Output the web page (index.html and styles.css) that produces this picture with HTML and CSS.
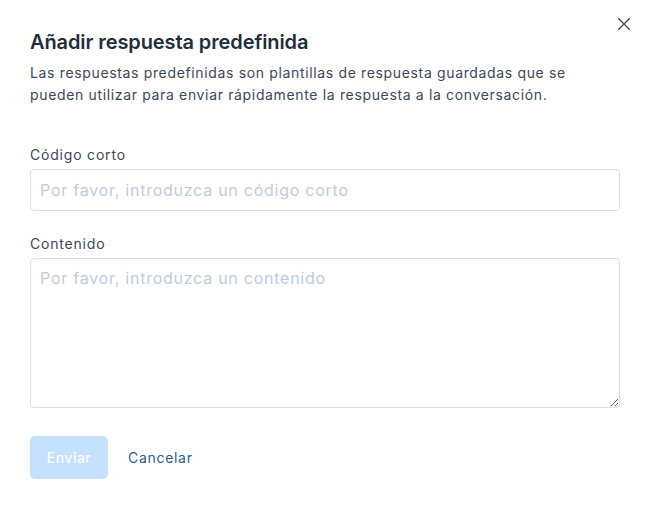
FILE: index.html
```html
<!DOCTYPE html>
<html lang="es">
<head>
<meta charset="utf-8">
<link rel="stylesheet" href="styles.css">
</head>
<body>
<div class="modal">
  <button class="close" aria-label="Cerrar">
    <svg width="14" height="14" viewBox="0 0 14 14"><path d="M1.5 1.5 L12.5 12.5 M12.5 1.5 L1.5 12.5" stroke="#3c4858" stroke-width="1.3" fill="none" stroke-linecap="round"/></svg>
  </button>
  <header class="head">
    <h2 class="title">Añadir respuesta predefinida</h2>
    <p class="desc">Las respuestas predefinidas son plantillas de respuesta guardadas que se pueden utilizar para enviar rápidamente la respuesta a la conversación.</p>
  </header>
  <form class="form">
    <label class="field">
      <span class="label">Código corto</span>
      <input class="input" type="text" placeholder="Por favor, introduzca un código corto">
    </label>
    <label class="field">
      <span class="label">Contenido</span>
      <textarea class="textarea" placeholder="Por favor, introduzca un contenido"></textarea>
    </label>
    <div class="actions">
      <button type="button" class="btn-primary">Enviar</button>
      <button type="button" class="btn-link">Cancelar</button>
    </div>
  </form>
</div>
</body>
</html>
```
FILE: styles.css
```css
* { box-sizing: border-box; }
html, body { margin: 0; padding: 0; background: #fff; }
body { font-family: Inter, "Noto Sans", sans-serif; color: #1f2d3d; }
.modal { position: relative; width: 649px; height: 519px; padding: 28px 29px 0 30px; }
.close { position: absolute; top: 17px; right: 18px; width: 14px; height: 14px; padding: 0; border: 0; background: none; display: flex; }
.head { margin-bottom: 39px; }
.title { margin: 0; font-size: 20px; font-weight: 600; line-height: 28px; color: #1f2d3d; letter-spacing: -0.1px; }
.desc { margin: 6px 0 0; font-size: 14px; line-height: 22px; color: #3c4858; width: 570px; letter-spacing: 0.65px; }
.form { display: flex; flex-direction: column; }
.field { display: flex; flex-direction: column; margin-bottom: 23px; }
.label { font-size: 14px; line-height: 20px; color: #3c4858; margin-bottom: 4px; font-weight: 400; letter-spacing: 0.8px; }
.input, .textarea { width: 590px; border: 1px solid #dae1e7; border-radius: 4px; font-family: inherit; font-size: 16px; letter-spacing: 0.75px; color: #1f2d3d; padding: 0 9px; outline: none; }
.input { height: 42px; }
.textarea { height: 150px; padding-top: 7px; resize: vertical; line-height: 24px; }
.input::placeholder, .textarea::placeholder { color: #c0ccda; }
.actions { display: flex; align-items: center; gap: 20px; margin-top: 5px; }
.btn-primary { width: 78px; height: 43px; border: 0; border-radius: 5px; background: #c4e1ff; color: #fff; font-family: inherit; font-size: 14px; font-weight: 500; letter-spacing: 0.5px; }
.btn-link { border: 0; background: none; padding: 0; color: #2a5d94; font-family: inherit; font-size: 14px; font-weight: 400; letter-spacing: 0.7px; }
```
